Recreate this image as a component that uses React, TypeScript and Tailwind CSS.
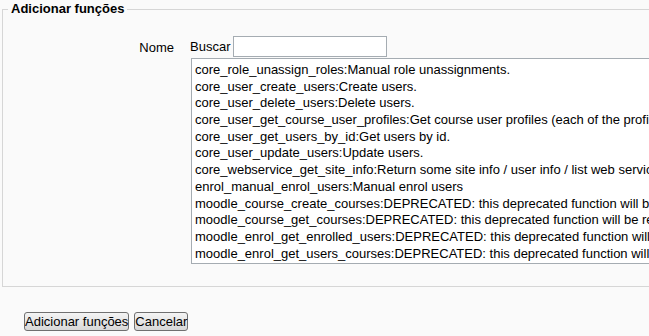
const options = [
  "core_role_unassign_roles:Manual role unassignments.",
  "core_user_create_users:Create users.",
  "core_user_delete_users:Delete users.",
  "core_user_get_course_user_profiles:Get course user profiles (each of the profiles matching a course id and a user id).",
  "core_user_get_users_by_id:Get users by id.",
  "core_user_update_users:Update users.",
  "core_webservice_get_site_info:Return some site info / user info / list web service functions",
  "enrol_manual_enrol_users:Manual enrol users",
  "moodle_course_create_courses:DEPRECATED: this deprecated function will be removed in a future version.",
  "moodle_course_get_courses:DEPRECATED: this deprecated function will be removed in a future version.",
  "moodle_enrol_get_enrolled_users:DEPRECATED: this deprecated function will be removed in a future version.",
  "moodle_enrol_get_users_courses:DEPRECATED: this deprecated function will be removed in a future version.",
];

export default function App() {
  return (
    <div className="h-[336px] w-[649px] overflow-hidden bg-[#fafafa] font-['Liberation_Sans',Arial,sans-serif] text-[13px] text-black">
      <fieldset className="mx-[2px] mt-[2px] h-[285px] border border-[#d6d6d6] pl-0">
        <legend className="ml-[5px] px-[3px] text-[13px] font-bold leading-[14px]">Adicionar funções</legend>
        <div className="flex pt-[20px]">
          <div className="w-[173px] pr-[2px] pt-[4px] text-right leading-[15px]">Nome</div>
          <div className="ml-[14px] flex flex-col">
            <div className="flex items-center">
              <span className="leading-[15px]">Buscar</span>
              <input
                type="text"
                className="ml-[3px] h-[21px] w-[154px] border border-[#a5acb2] bg-white px-1"
              />
            </div>
            <div className="mt-[1px] ml-[1px] h-[206px] w-[470px] overflow-hidden border border-[#a5acb2] bg-white pt-[3px] pl-[3px]">
              {options.map((o) => (
                <div key={o} className="h-[16.7px] whitespace-nowrap leading-[16.7px]">
                  {o}
                </div>
              ))}
            </div>
          </div>
        </div>
      </fieldset>
      <div className="flex gap-[5px] pl-[24px] pt-[25px]">
        <button className="h-[19px] rounded-[3px] border border-[#707070] bg-gradient-to-b from-[#f4f4f4] to-[#d8d8d8] px-0 leading-[15px]">
          Adicionar funções
        </button>
        <button className="h-[19px] rounded-[3px] border border-[#707070] bg-gradient-to-b from-[#f4f4f4] to-[#d8d8d8] px-0 leading-[15px]">
          Cancelar
        </button>
      </div>
    </div>
  );
}
